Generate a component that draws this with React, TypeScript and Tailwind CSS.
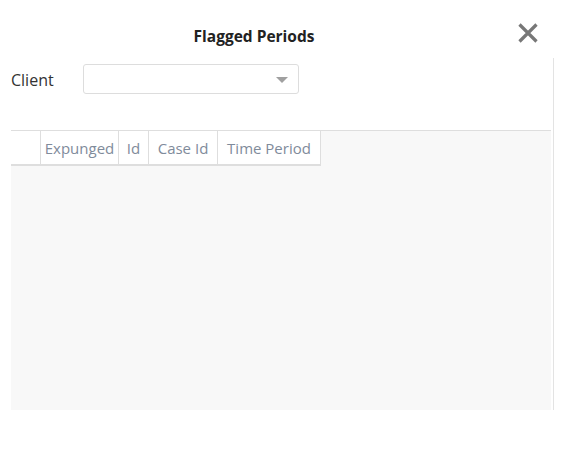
import React from "react";

const cols = [
  { label: "", w: "w-[30px]" },
  { label: "Expunged", w: "w-[78px]" },
  { label: "Id", w: "w-[30px]" },
  { label: "Case Id", w: "w-[69px]" },
  { label: "Time Period", w: "w-[103px]" },
];

function CloseIcon() {
  return (
    <svg width="20" height="20" viewBox="0 0 20 20">
      <path d="M1.5 1.5 L18.5 18.5 M18.5 1.5 L1.5 18.5" stroke="#777" strokeWidth="3.2" />
    </svg>
  );
}

export default function App() {
  return (
    <div className="h-[464px] w-[564px] bg-white font-['Open_Sans',sans-serif]">
      <div className="flex h-[58px] items-start pt-[23px]">
        <div className="flex-1 pt-[3px] text-center text-[15.5px] leading-[20px] font-bold text-[#222]">Flagged Periods</div>
        <button className="mr-[16px] flex w-[40px] items-center justify-center">
          <CloseIcon />
        </button>
      </div>
      <div className="ml-[11px] h-[352px] w-[543px] border-r border-[#e3e3e3] pr-[2px] pt-[6px]">
        <div className="flex h-[30px] items-center">
          <span className="w-[72px] pt-[2px] text-[16px] text-[#333]">Client</span>
          <div className="relative h-[30px] w-[216px] rounded-[3px] border border-[#ddd] bg-white">
            <span className="absolute right-[10px] top-[12px] h-0 w-0 border-x-[6px] border-t-[6px] border-x-transparent border-t-[#a0a0a0]" />
          </div>
        </div>
        <div className="mt-[36px] h-[280px] border-t border-[#dedede] bg-[#f8f8f8]">
          <div className="flex">
            {cols.map((c, i) => (
              <div
                key={i}
                className={`${c.w} flex h-[35px] items-center justify-center border-b-2 border-r border-[#dedede] bg-white pt-[1px] text-[15px] text-[#7f8b9b]`}
              >
                {c.label}
              </div>
            ))}
          </div>
        </div>
      </div>
    </div>
  );
}
